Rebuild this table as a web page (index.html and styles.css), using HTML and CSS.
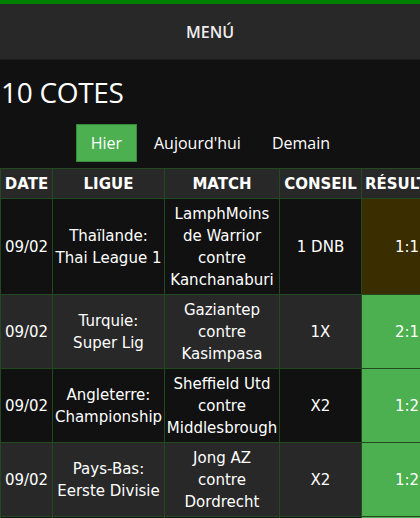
FILE: index.html
```html
<!DOCTYPE html>
<html lang="fr">
<head>
<meta charset="utf-8">
<title>10 Cotes</title>
<link rel="stylesheet" href="styles.css">
</head>
<body>
<div class="topline"></div>
<nav class="menubar">MENÚ</nav>
<main class="content">
  <h1 class="title">10 COTES</h1>
  <div class="tabs">
    <span class="tab active">Hier</span>
    <span class="tab">Aujourd'hui</span>
    <span class="tab">Demain</span>
  </div>
  <table class="odds">
    <colgroup>
      <col class="c-date"><col class="c-league"><col class="c-match"><col class="c-tip"><col class="c-res">
    </colgroup>
    <thead>
      <tr><th>DATE</th><th>LIGUE</th><th>MATCH</th><th>CONSEIL</th><th>RÉSULTAT</th></tr>
    </thead>
    <tbody>
      <tr class="dark">
        <td>09/02</td><td>Thaïlande:<br>Thai League 1</td><td>LamphMoins<br>de Warrior<br>contre<br>Kanchanaburi</td><td>1 DNB</td><td class="res draw">1:1</td>
      </tr>
      <tr class="light">
        <td>09/02</td><td>Turquie:<br>Super Lig</td><td>Gaziantep<br>contre<br>Kasimpasa</td><td>1X</td><td class="res win">2:1</td>
      </tr>
      <tr class="dark">
        <td>09/02</td><td>Angleterre:<br>Championship</td><td>Sheffield Utd<br>contre<br>Middlesbrough</td><td>X2</td><td class="res win">1:2</td>
      </tr>
      <tr class="light">
        <td>09/02</td><td>Pays-Bas:<br>Eerste Divisie</td><td>Jong AZ<br>contre<br>Dordrecht</td><td>X2</td><td class="res win">1:2</td>
      </tr>
      <tr class="dark">
        <td>09/02</td><td>Espagne:<br>La Liga</td><td>Getafe<br>contre<br>Sevilla</td><td>1X</td><td class="res win">1:0</td>
      </tr>
    </tbody>
  </table>
</main>
</body>
</html>
```

FILE: styles.css
```css
html, body {
  margin: 0;
  padding: 0;
  background: #111111;
  overflow: hidden;
}
body {
  width: 420px;
  height: 518px;
  color: #ffffff;
  font-family: "Open Sans", "Noto Sans", sans-serif;
}
.topline {
  height: 4px;
  background: #008000;
}
.menubar {
  height: 55px;
  background: #282828;
  border-bottom: 1px solid #1c1c1c;
  display: flex;
  align-items: center;
  justify-content: center;
  font-size: 16px;
  font-weight: 600;
  color: #eeeeee;
}
.content {
  background: #111111;
}
.title {
  margin: 0;
  padding: 13px 0 0 1px;
  height: 51px;
  font-size: 28px;
  font-weight: 400;
  line-height: 38px;
  letter-spacing: -0.3px;
}
.tabs {
  display: flex;
  justify-content: center;
  padding-left: 2px;
  height: 38px;
  margin-bottom: 6px;
}
.tab {
  display: flex;
  align-items: center;
  padding: 0 16px;
  font-size: 16px;
  height: 38px;
  box-sizing: border-box;
}
.tab.active {
  background: #4caf50;
  border: 1px solid #3a8a3e;
  width: 61px;
  justify-content: center;
  padding: 0;
}
.tab:nth-child(2) {
  padding-left: 17px;
  padding-right: 15px;
}
.odds {
  border-collapse: collapse;
  table-layout: fixed;
  width: 470px;
  font-family: "DejaVu Sans", sans-serif;
  font-size: 15px;
  line-height: 22px;
  text-align: center;
}
.c-date { width: 52px; }
.c-league { width: 112px; }
.c-match { width: 115px; }
.c-tip { width: 82px; }
.c-res { width: 109px; }
.odds th, .odds td {
  border: 1px solid #22491f;
  padding: 4px 0 3px;
  white-space: nowrap;
}
.odds th {
  background: #282828;
  font-weight: bold;
  font-size: 15px;
  height: 22px;
}
.odds th:last-child {
  text-align: left;
  padding-left: 3px;
}
.odds tr.dark td { background: #111111; }
.odds tr.light td { background: #282828; }
.odds td.res { text-align: left; padding-left: 33px; }
.odds tr td.draw { background: #3a2d00; }
.odds tr td.win { background: #4caf50; }
```
